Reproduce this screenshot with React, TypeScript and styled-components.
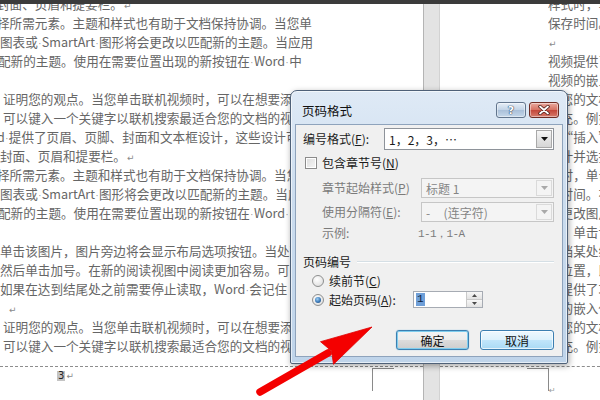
import React from 'react';
import styled, { createGlobalStyle } from 'styled-components';

const GlobalStyle = createGlobalStyle`
  html, body {
    margin: 0;
    padding: 0;
    background: #fff;
  }
  body {
    font-family: "Noto Sans CJK SC", "Noto Sans", sans-serif;
  }
`;

const Screen = styled.div`
  position: relative;
  width: 600px;
  height: 400px;
  overflow: hidden;
  background: #fff;
  display: flex;
  flex-direction: column;
`;

const TopBar = styled.div`
  flex: none;
  height: 4px;
  background: #3b3b3b;
`;

const Spread = styled.div`
  flex: 1;
  display: flex;
  min-height: 0;
`;

const Page = styled.div<{ $w?: number }>`
  flex: ${(p) => (p.$w ? 'none' : '1')};
  width: ${(p) => (p.$w ? `${p.$w}px` : 'auto')};
  display: flex;
  flex-direction: column;
  background: #fff;
  overflow: hidden;
`;

const PageGap = styled.div`
  flex: none;
  width: 15px;
  background: #e3e3e3;
  border-left: 1px solid #b4b4b4;
  border-right: 1px solid #d2d2d2;
`;

const PageBody = styled.div<{ $pad: number }>`
  flex: none;
  height: 362px;
  overflow: hidden;
  padding-left: ${(p) => p.$pad}px;
`;

const TextColumn = styled.div<{ $w?: number }>`
  margin-top: -10.5px;
  width: ${(p) => (p.$w ? `${p.$w}px` : 'auto')};
  overflow: hidden;
  font-family: "Noto Sans CJK SC", sans-serif;
  font-size: 12.6px;
  line-height: 19px;
  color: #666;
`;

const DocLine = styled.div<{ $x: number }>`
  height: 19px;
  white-space: nowrap;
  margin-left: ${(p) => p.$x}px;
`;

const ParaMark = styled.span`
  font-family: "DejaVu Sans", sans-serif;
  font-size: 9px;
  color: #8a8a8a;
  margin-left: 1px;
`;

const SpaceDot = styled.span`
  display: inline-block;
  width: 4px;
  text-align: center;
  font-family: "DejaVu Sans", sans-serif;
  font-size: 8px;
  color: #8a8a8a;
`;

const FooterRule = styled.div`
  flex: none;
  height: 0;
  border-top: 1px dashed #8d8d8d;
`;

const FooterRow = styled.div`
  flex: 1;
  display: flex;
  align-items: flex-start;
`;

const FooterText = styled.div<{ $w: number; $pad: number }>`
  width: ${(p) => p.$w}px;
  padding-left: ${(p) => p.$pad}px;
  padding-top: 4px;
  font-family: "DejaVu Sans", sans-serif;
  font-size: 10px;
  line-height: 10px;
  color: #222;
  display: flex;
  align-items: flex-end;
`;

const PageNumber = styled.span`
  background: #c4c4c4;
  padding: 0 1px;
`;

const CornerMark = styled.div<{ $side: 'left' | 'right'; $ml?: number }>`
  flex: none;
  width: 21px;
  height: 22px;
  margin-top: 1px;
  margin-left: ${(p) => p.$ml ?? 0}px;
  border-top: 1px solid #8a8a8a;
  ${(p) => (p.$side === 'left' ? 'border-left' : 'border-right')}: 1px solid #8a8a8a;
`;

const FooterMark = styled.span`
  margin-top: 19px;
  font-family: "DejaVu Sans", sans-serif;
  font-size: 8px;
  color: #9a9a9a;
`;

/* ---------- dialog ---------- */

const Dialog = styled.div`
  position: absolute;
  left: 290px;
  top: 90px;
  width: 278px;
  height: 274px;
  box-sizing: border-box;
  display: flex;
  flex-direction: column;
  padding: 0 4px 6px 4px;
  border: 1px solid #4f6178;
  border-radius: 7px 7px 2px 2px;
  background: linear-gradient(180deg, #dfeaf6 0%, #cbdcee 40%, #bfd4ea 100%);
  box-shadow: inset 0 0 0 1px rgba(255, 255, 255, 0.6), 1px 2px 6px rgba(0, 0, 0, 0.35);
  font-family: "Noto Sans CJK SC", sans-serif;
  font-size: 12px;
  color: #1b1b1b;
`;

const TitleBar = styled.div`
  flex: none;
  height: 33px;
  box-sizing: border-box;
  display: flex;
  align-items: center;
  padding: 5px 4px 0 7px;
`;

const Title = styled.div`
  flex: 1;
  font-size: 12.5px;
  color: #111;
`;

const CaptionGroup = styled.div`
  display: flex;
  gap: 3px;
`;

const CaptionButton = styled.div<{ $close?: boolean }>`
  width: 30px;
  height: 16px;
  box-sizing: border-box;
  display: flex;
  align-items: center;
  justify-content: center;
  border-radius: 3px;
  border: 1px solid ${(p) => (p.$close ? '#6e2c24' : '#62758d')};
  background: ${(p) =>
    p.$close
      ? 'linear-gradient(180deg, #e9aa9f 0%, #d67364 48%, #c4473a 52%, #d67a6b 100%)'
      : 'linear-gradient(180deg, #e6eef7 0%, #c3d4e7 48%, #aac0d9 52%, #c5d7ea 100%)'};
  box-shadow: inset 0 0 0 1px rgba(255, 255, 255, 0.45);
`;

const HelpGlyph = styled.span`
  font-family: "DejaVu Sans", sans-serif;
  font-weight: bold;
  font-size: 11px;
  line-height: 11px;
  color: #fff;
  text-shadow: 0 0 1px #2f4460, 0 0 1px #2f4460, 0 0 1px #2f4460;
`;

const Client = styled.div`
  flex: 1;
  display: flex;
  flex-direction: column;
  background: #f0f0f0;
  border: 1px solid #8ea3bc;
  padding: 3px 8px 0 7px;
`;

const Row = styled.div<{ $h: number; $mt: number }>`
  display: flex;
  align-items: center;
  height: ${(p) => p.$h}px;
  margin-top: ${(p) => p.$mt}px;
`;

const SubSection = styled.div`
  display: flex;
  flex-direction: column;
  padding-left: 19px;
`;

const Label = styled.span<{ $w?: number; $disabled?: boolean }>`
  flex: none;
  width: ${(p) => (p.$w ? `${p.$w}px` : 'auto')};
  white-space: nowrap;
  color: ${(p) => (p.$disabled ? '#7b7b7b' : '#1b1b1b')};
  line-height: 16px;
`;

const Key = styled.u`
  text-underline-offset: 1px;
`;

const Combo = styled.div<{ $w: number; $h: number; $disabled?: boolean }>`
  flex: none;
  width: ${(p) => p.$w}px;
  height: ${(p) => p.$h}px;
  box-sizing: border-box;
  display: flex;
  border: 1px solid ${(p) => (p.$disabled ? '#c6c6c6' : '#8e939a')};
  background: ${(p) => (p.$disabled ? '#f4f4f4' : '#fff')};
  margin-left: auto;
`;

const ComboText = styled.div<{ $disabled?: boolean }>`
  flex: 1;
  display: flex;
  align-items: center;
  padding-left: 4px;
  white-space: pre;
  color: ${(p) => (p.$disabled ? '#858585' : '#1b1b1b')};
`;

const DropButton = styled.div<{ $disabled?: boolean }>`
  flex: none;
  width: 16px;
  margin: 1px;
  box-sizing: border-box;
  display: flex;
  align-items: center;
  justify-content: center;
  border: 1px solid ${(p) => (p.$disabled ? '#dadada' : '#a9a9a9')};
  background: ${(p) =>
    p.$disabled ? '#f4f4f4' : 'linear-gradient(180deg, #f6f6f6 0%, #e4e4e4 50%, #d6d6d6 100%)'};
`;

const Mono = styled.span<{ $disabled?: boolean }>`
  font-family: "Liberation Mono", monospace;
  font-size: 11px;
  letter-spacing: -0.6px;
  color: ${(p) => (p.$disabled ? '#7b7b7b' : '#1b1b1b')};
`;

const CheckBox = styled.div`
  flex: none;
  width: 12px;
  height: 12px;
  box-sizing: border-box;
  margin-left: 2px;
  margin-right: 5px;
  border: 1px solid #8b8b8b;
  background: linear-gradient(135deg, #dcdcdc 0%, #f6f6f6 100%);
  box-shadow: inset 0 0 0 1px #fff;
`;

const GroupHeading = styled.div`
  display: flex;
  align-items: center;
  height: 16px;
  margin-top: 13px;
`;

const GroupLine = styled.div`
  flex: 1;
  margin-left: 6px;
  height: 1px;
  background: #d5dfe5;
  border-bottom: 1px solid #fff;
`;

const Radio = styled.div<{ $checked?: boolean }>`
  flex: none;
  width: 12px;
  height: 12px;
  box-sizing: border-box;
  margin-left: 9px;
  margin-right: 5px;
  border-radius: 50%;
  border: 1px solid #8e8f8f;
  background: radial-gradient(circle at 40% 35%, #ffffff 0%, #e4e4e4 70%, #cfcfcf 100%);
  display: flex;
  align-items: center;
  justify-content: center;
  &::after {
    content: '';
    display: ${(p) => (p.$checked ? 'block' : 'none')};
    width: 6px;
    height: 6px;
    border-radius: 50%;
    background: radial-gradient(circle at 40% 35%, #9fd0f5 0%, #3a79b8 55%, #1e3f66 100%);
  }
`;

const Spinner = styled.div`
  flex: none;
  width: 70px;
  height: 17px;
  box-sizing: border-box;
  display: flex;
  border: 1px solid #a6abb3;
  background: #fff;
`;

const SpinText = styled.div`
  flex: 1;
  display: flex;
  align-items: center;
  padding-left: 2px;
`;

const Selected = styled.span`
  background: #6f9fd8;
  color: #0f2340;
  font-family: "Liberation Mono", monospace;
  font-size: 11px;
  line-height: 13px;
  padding: 0 1px;
`;

const SpinButtons = styled.div`
  flex: none;
  width: 15px;
  display: flex;
  flex-direction: column;
  border-left: 1px solid #c9c9c9;
`;

const SpinHalf = styled.div`
  flex: 1;
  display: flex;
  align-items: center;
  justify-content: center;
  background: linear-gradient(180deg, #f7f7f7 0%, #e2e2e2 100%);
  & + & {
    border-top: 1px solid #c9c9c9;
  }
`;

const ButtonRow = styled.div`
  display: flex;
  justify-content: flex-end;
  gap: 11px;
  margin-top: 22px;
`;

const PushButton = styled.div<{ $w: number; $default?: boolean }>`
  width: ${(p) => p.$w}px;
  height: 20px;
  box-sizing: border-box;
  display: flex;
  align-items: center;
  justify-content: center;
  border-radius: 3px;
  border: 1px solid #3c7fb1;
  background: ${(p) =>
    p.$default
      ? 'linear-gradient(180deg, #f3f3f3 0%, #ececec 50%, #dcdcdc 51%, #cdcdcd 100%)'
      : 'linear-gradient(180deg, #eef8fe 0%, #dcf1fc 50%, #c1e6fb 51%, #a9daf5 100%)'};
  box-shadow: ${(p) =>
    p.$default ? 'inset 0 0 0 1px #7fcdee, 0 0 1px #5ab0dc' : 'inset 0 0 0 1px rgba(255,255,255,0.7)'};
  color: #111;
`;

const Overlay = styled.svg`
  position: absolute;
  left: 0;
  top: 0;
  pointer-events: none;
`;

/* ---------- data ---------- */

const leftLines: [number, string][] = [
  [-3, '封面、页眉和提要栏。↵'],
  [-3, '择所需元素。主题和样式也有助于文档保持协调。当您单'],
  [0, '图表或·SmartArt·图形将会更改以匹配新的主题。当应用'],
  [-2, '配新的主题。使用在需要位置出现的新按钮在·Word·中'],
  [0, ''],
  [3, '证明您的观点。当您单击联机视频时，可以在想要添加的视'],
  [3, '可以键入一个关键字以联机搜索最适合您的文档的视频。'],
  [-3, 'd·提供了页眉、页脚、封面和文本框设计，这些设计可互为'],
  [0, '封面、页眉和提要栏。↵'],
  [-3, '择所需元素。主题和样式也有助于文档保持协调。当您单'],
  [0, '图表或·SmartArt·图形将会更改以匹配新的主题。当应用'],
  [-2, '配新的主题。使用在需要位置出现的新按钮在·Word·中'],
  [0, ''],
  [0, '单击该图片，图片旁边将会显示布局选项按钮。当处理'],
  [0, '然后单击加号。在新的阅读视图中阅读更加容易。可以'],
  [0, '如果在达到结尾处之前需要停止读取，Word·会记住'],
  [8, '↵'],
  [3, '证明您的观点。当您单击联机视频时，可以在想要添加的视'],
  [3, '可以键入一个关键字以联机搜索最适合您的文档的视频。'],
];

const rightLines: string[] = [
  '样式时，单击该图片',
  '保存时间。',
  '↵',
  '视频提供了功能强大的方法',
  '视频的嵌入代码中进行粘贴',
  '使您的文档具有专业外观',
  '补充。例如，您可以添加',
  '后“插入”，然后从不同库',
  '设计并选择所需元素',
  '式时，单击该图片',
  '存时间。在新的阅读视图',
  '要更改图片适应文档的方式',
  '时，单击该图片，图片旁边',
  '文档某处继续阅读',
  '上位置，即使在另一个设备',
  '频提供了功能强大的方法',
  '频的嵌入代码中进行粘贴',
  '使您的文档具有专业外观',
  '补充。例如，您可以添加',
];

// split a line into plain text, space dots and paragraph marks
const renderText = (text: string) =>
  text.split(/([·↵])/).map((part, i) => {
    if (part === '↵') return <ParaMark key={i}>↵</ParaMark>;
    if (part === '·') return <SpaceDot key={i}>·</SpaceDot>;
    return <React.Fragment key={i}>{part}</React.Fragment>;
  });

const DownArrow: React.FC<{ color: string }> = ({ color }) => (
  <svg width="7" height="4" viewBox="0 0 7 4">
    <polygon points="0,0 7,0 3.5,4" fill={color} />
  </svg>
);

export default function App() {
  return (
    <>
      <GlobalStyle />
      <Screen>
        <TopBar />
        <Spread>
          <Page $w={423}>
            <PageBody $pad={0}>
              <TextColumn $w={315}>
                {leftLines.map(([x, t], i) => (
                  <DocLine key={i} $x={x}>
                    {renderText(t)}
                  </DocLine>
                ))}
              </TextColumn>
            </PageBody>
            <FooterRule />
            <FooterRow>
              <FooterText $w={315} $pad={57}>
                <PageNumber>3</PageNumber>
                <ParaMark>↵</ParaMark>
              </FooterText>
              <CornerMark $side="left" />
            </FooterRow>
          </Page>
          <PageGap />
          <Page>
            <PageBody $pad={108}>
              <TextColumn>
                {rightLines.map((t, i) => (
                  <DocLine key={i} $x={0}>
                    {renderText(t)}
                  </DocLine>
                ))}
              </TextColumn>
            </PageBody>
            <FooterRule />
            <FooterRow>
              <CornerMark $side="right" $ml={87} />
              <FooterMark>↵</FooterMark>
            </FooterRow>
          </Page>
        </Spread>

        <Dialog>
          <TitleBar>
            <Title>页码格式</Title>
            <CaptionGroup>
              <CaptionButton>
                <HelpGlyph>?</HelpGlyph>
              </CaptionButton>
              <CaptionButton $close>
                <svg width="12" height="10" viewBox="0 0 12 10">
                  <path d="M2 1.5 L10 8.5 M10 1.5 L2 8.5" stroke="#4a1a14" strokeWidth="3.4" strokeLinecap="round" />
                  <path d="M2 1.5 L10 8.5 M10 1.5 L2 8.5" stroke="#fff" strokeWidth="1.8" strokeLinecap="round" />
                </svg>
              </CaptionButton>
            </CaptionGroup>
          </TitleBar>

          <Client>
            <Row $h={22} $mt={0}>
              <Label>
                编号格式(<Key>F</Key>):
              </Label>
              <Combo $w={170} $h={22}>
                <ComboText>1，2，3，…</ComboText>
                <DropButton>
                  <DownArrow color="#111" />
                </DropButton>
              </Combo>
            </Row>

            <Row $h={13} $mt={6}>
              <CheckBox />
              <Label>
                包含章节号(<Key>N</Key>)
              </Label>
            </Row>

            <SubSection>
              <Row $h={20} $mt={9}>
                <Label $w={98} $disabled>
                  章节起始样式(<Key>P</Key>)
                </Label>
                <Combo $w={133} $h={20} $disabled>
                  <ComboText $disabled>标题 1</ComboText>
                  <DropButton $disabled>
                    <DownArrow color="#a9a9a9" />
                  </DropButton>
                </Combo>
              </Row>
              <Row $h={20} $mt={4}>
                <Label $w={98} $disabled>
                  使用分隔符(<Key>E</Key>):
                </Label>
                <Combo $w={133} $h={20} $disabled>
                  <ComboText $disabled>{'-     (连字符)'}</ComboText>
                  <DropButton $disabled>
                    <DownArrow color="#a9a9a9" />
                  </DropButton>
                </Combo>
              </Row>
              <Row $h={16} $mt={3}>
                <Label $w={96} $disabled>
                  示例:
                </Label>
                <Mono $disabled>1-1，1-A</Mono>
              </Row>
            </SubSection>

            <GroupHeading>
              <Label>页码编号</Label>
              <GroupLine />
            </GroupHeading>

            <Row $h={16} $mt={3}>
              <Radio />
              <Label>
                续前节(<Key>C</Key>)
              </Label>
            </Row>
            <Row $h={17} $mt={2}>
              <Radio $checked />
              <Label $w={84}>
                起始页码(<Key>A</Key>):
              </Label>
              <Spinner>
                <SpinText>
                  <Selected>1</Selected>
                </SpinText>
                <SpinButtons>
                  <SpinHalf>
                    <svg width="5" height="3" viewBox="0 0 5 3">
                      <polygon points="0,3 5,3 2.5,0" fill="#4a4a4a" />
                    </svg>
                  </SpinHalf>
                  <SpinHalf>
                    <svg width="5" height="3" viewBox="0 0 5 3">
                      <polygon points="0,0 5,0 2.5,3" fill="#4a4a4a" />
                    </svg>
                  </SpinHalf>
                </SpinButtons>
              </Spinner>
            </Row>

            <ButtonRow>
              <PushButton $w={73} $default>
                确定
              </PushButton>
              <PushButton $w={74}>取消</PushButton>
            </ButtonRow>
          </Client>
        </Dialog>

        <Overlay width="600" height="400" viewBox="0 0 600 400">
          <line x1="260" y1="392" x2="328" y2="353" stroke="#f40000" strokeWidth="7.5" strokeLinecap="round" />
          <polygon points="372,327 320.5,341.7 331.5,351 333.5,364.3" fill="#f40000" stroke="#e00000" strokeWidth="0.8" strokeLinejoin="round" />
        </Overlay>
      </Screen>
    </>
  );
}
